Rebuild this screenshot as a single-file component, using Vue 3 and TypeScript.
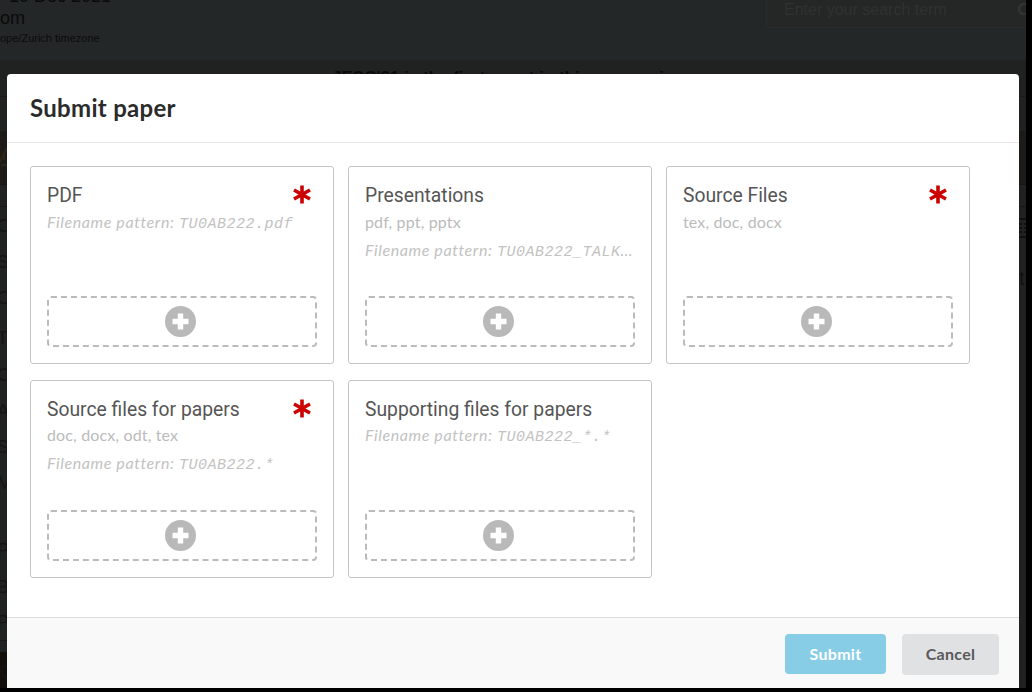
<script setup lang="ts">
interface Item {
  title: string
  required: boolean
  ext?: string
  prefix?: string
  pattern?: string
}

const items: Item[] = [
  { title: 'PDF', required: true, prefix: 'Filename pattern: ', pattern: 'TU0AB222.pdf' },
  { title: 'Presentations', required: false, ext: 'pdf, ppt, pptx', prefix: 'Filename pattern: ', pattern: 'TU0AB222_TALK.pdf' },
  { title: 'Source Files', required: true, ext: 'tex, doc, docx' },
  { title: 'Source files for papers', required: true, ext: 'doc, docx, odt, tex', prefix: 'Filename pattern: ', pattern: 'TU0AB222.*' },
  { title: 'Supporting files for papers', required: false, prefix: 'Filename pattern: ', pattern: 'TU0AB222_*.*' },
]

const sideRows = [
  { t: 'Ov', h: 36 },
  { t: 'So', h: 36 },
  { t: 'Ca', h: 40 },
  { t: 'Ti', h: 37 },
  { t: 'Co', h: 36 },
  { t: 'Au', h: 36 },
  { t: 'Sp', h: 36 },
  { t: 'Mi', h: 67 },
  { t: 'Pa', h: 37 },
  { t: 'Bo', h: 35 },
  { t: 'Pa', h: 36 },
]
</script>

<template>
  <div class="page">
    <header class="top">
      <div class="conf">
        <div class="date">10 Dec 2021</div>
        <div class="place">om</div>
        <div class="tz">ope/Zurich timezone</div>
      </div>
      <div class="search">
        <span>Enter your search term</span>
        <svg class="lens" width="16" height="16" viewBox="0 0 16 16">
          <circle cx="7" cy="7" r="5" fill="none" stroke="#333" stroke-width="2.6" />
        </svg>
      </div>
    </header>
    <div class="main">
      <div class="lead">JESC'21 is the first event in this conversion</div>
      <div class="strip"></div>
      <div class="warn">
        <svg class="warn-icon" width="7" height="20" viewBox="0 0 7 20">
          <path d="M1 19H7M7 2L-2 19" stroke="#2c2518" stroke-width="2" fill="none" />
          <path d="M4 8V14" stroke="#2c2518" stroke-width="2" />
        </svg>
      </div>
      <div class="gap-row"></div>
      <div class="lower">
        <aside class="side">
          <div v-for="(r, i) in sideRows" :key="i" class="side-row" :style="{ height: r.h + 'px' }">{{ r.t }}</div>
          <div class="side-spacer"></div>
          <div class="side-foot">Ci</div>
        </aside>
        <aside class="rail">
          <svg class="rail-icon" width="7" height="20" viewBox="0 0 7 20">
            <path d="M0 1H7M0 6H3M5 6H7M0 10H3M5 10H7M0 14H3M5 14H7M0 19H7" stroke="#111" stroke-width="2" />
          </svg>
          <div class="rail-text">t.</div>
        </aside>
      </div>
    </div>

    <section class="modal">
      <h2 class="modal-head">Submit paper</h2>
      <div class="modal-body">
        <article v-for="item in items" :key="item.title" class="card">
          <div class="card-head">
            <h3>{{ item.title }}</h3>
            <svg v-if="item.required" class="star" width="18" height="19" viewBox="0 0 18 19">
              <path d="M9 0.5V18.5M1 5L17 14M17 5L1 14" stroke="#cc0000" stroke-width="3.6" fill="none" />
            </svg>
          </div>
          <p v-if="item.ext" class="sub">{{ item.ext }}</p>
          <p v-if="item.pattern" class="sub pattern">
            {{ item.prefix }}<code>{{ item.pattern }}</code>
          </p>
          <button class="drop" type="button" aria-label="Add file">
            <svg width="31" height="31" viewBox="0 0 31 31">
              <circle cx="15.5" cy="15.5" r="15.5" fill="#b9b9b9" />
              <path d="M15.5 7.5V23.5M7.5 15.5H23.5" stroke="#fff" stroke-width="5.4" />
            </svg>
          </button>
        </article>
      </div>
      <footer class="modal-foot">
        <button class="btn submit" type="button">Submit</button>
        <button class="btn cancel" type="button">Cancel</button>
      </footer>
    </section>
  </div>
</template>

<style>
html, body { margin: 0; background: #000; }
</style>

<style scoped>
.page {
  position: relative;
  width: 1026px;
  height: 688px;
  overflow: hidden;
  background: #202121;
  font-family: "Liberation Sans", Arial, sans-serif;
  color: #0a0a0a;
}
.top {
  height: 60px;
  background: #232728;
  display: flex;
  justify-content: space-between;
  align-items: flex-start;
}
.conf { margin-top: -15px; }
.date { font-size: 18px; line-height: 23px; margin-left: 9px; }
.place { font-size: 18px; line-height: 20px; }
.tz { font-size: 11px; line-height: 13px; color: #0c0c0c; margin-top: 4px; }
.search {
  width: 260px;
  height: 28px;
  padding: 0 0 8px 17px;
  box-sizing: border-box;
  border-left: 1px solid #2a2b2b;
  border-bottom: 1px solid #2a2b2b;
  border-radius: 0 0 0 3px;
  background: #252626;
  display: flex;
  align-items: center;
  justify-content: space-between;
  font-size: 16px;
  color: #313131;
}
.lens { flex: none; margin-right: -7px; margin-top: 1px; }
.main { display: flex; flex-direction: column; height: 628px; }
.lead {
  height: 37px;
  flex: none;
  box-sizing: border-box;
  padding: 8px 0 0 332px;
  font-size: 17px;
  font-weight: 700;
  white-space: nowrap;
  color: #0a0a0a;
  border-bottom: 1px solid #1a1a1a;
}
.strip { height: 34px; flex: none; }
.warn {
  height: 54px;
  flex: none;
  box-sizing: border-box;
  padding-top: 15px;
  background: #1d1b17;
  border-bottom: 1px solid #1a150e;
}
.warn-icon { display: block; }
.gap-row { height: 21px; flex: none; border-bottom: 1px solid #161616; }
.lower { flex: 1; display: flex; justify-content: space-between; min-height: 0; }
.side {
  width: 7px;
  flex: none;
  overflow: hidden;
  padding-top: 1px;
  font-size: 18px;
  color: #141414;
  display: flex;
  flex-direction: column;
}
.side-row {
  flex: none;
  line-height: 36px;
  margin-left: -3px;
  white-space: nowrap;
}
.side-spacer { height: 11px; flex: none; border-top: 1px solid #181818; }
.side-foot {
  height: 36px;
  line-height: 40px;
  flex: none;
  background: #120f0b;
  white-space: nowrap;
  margin-left: -3px;
  padding-left: 3px;
}
.rail { width: 7px; flex: none; overflow: hidden; padding-top: 11px; }
.rail-icon { display: block; }
.rail-text { margin-top: 28px; font-size: 20px; line-height: 24px; color: #111; }
.modal {
  position: absolute;
  left: 7px;
  top: 74px;
  width: 1012px;
  height: 614px;
  background: #fff;
  border-radius: 4px 4px 0 0;
  display: flex;
  flex-direction: column;
  overflow: hidden;
}
.modal-head {
  margin: 0;
  height: 68px;
  flex: none;
  padding: 0 23px;
  border-bottom: 1px solid #e8e8e8;
  font-family: Lato, sans-serif;
  font-size: 24px;
  font-weight: 700;
  letter-spacing: 0.3px;
  line-height: 68px;
  color: #2b2b2b;
}
.modal-body {
  flex: 1;
  padding: 23px 23px 0;
  display: grid;
  grid-template-columns: repeat(3, 304px);
  grid-auto-rows: 198px;
  column-gap: 14px;
  row-gap: 16px;
  align-content: start;
}
.card {
  box-sizing: border-box;
  border: 1px solid #c4c4c4;
  border-radius: 3px;
  padding: 17px 16px 16px;
  display: flex;
  flex-direction: column;
  min-width: 0;
}
.card:nth-child(n+4) .sub:first-of-type { margin-top: 3px; }
.card-head {
  display: flex;
  justify-content: space-between;
  align-items: center;
  height: 24px;
  padding-right: 6px;
}
.card-head h3 {
  margin: 0;
  font-family: Roboto, sans-serif;
  font-size: 19.3px;
  font-weight: 400;
  line-height: 24px;
  color: #555;
}
.star { flex: none; margin-top: -3px; }
.sub {
  margin: 4px 0;
  height: 20px;
  flex: none;
  font-family: Lato, sans-serif;
  font-size: 16px;
  letter-spacing: 0.15px;
  line-height: 20px;
  color: #bbb;
  white-space: nowrap;
  overflow: hidden;
  text-overflow: ellipsis;
}
.pattern { font-style: italic; letter-spacing: 0.6px; color: #c2c2c2; }
.pattern code {
  font-family: "Liberation Mono", monospace;
  font-size: 15px;
  font-style: italic;
  letter-spacing: 0.5px;
}
.drop {
  margin-top: auto;
  height: 51px;
  flex: none;
  box-sizing: border-box;
  border: 2px dashed #bbb;
  border-radius: 4px;
  background: transparent;
  padding: 0 4px 0 0;
  display: flex;
  align-items: center;
  justify-content: center;
}
.modal-foot {
  height: 71px;
  flex: none;
  box-sizing: border-box;
  border-top: 1px solid #dcdcdc;
  background: #f9f9f9;
  padding: 16px 20px 0 0;
  display: flex;
  justify-content: flex-end;
  align-items: flex-start;
  gap: 16px;
}
.btn {
  border: 0;
  border-radius: 4px;
  font-family: Lato, sans-serif;
  font-size: 16px;
  font-weight: 700;
  letter-spacing: 0.3px;
  height: 40px;
  padding: 0 0 2px;
}
.submit { width: 101px; background: #88cde6; color: #fff; }
.cancel { width: 97px; height: 41px; padding-bottom: 3px; background: #e0e1e2; color: #595959; }
</style>
